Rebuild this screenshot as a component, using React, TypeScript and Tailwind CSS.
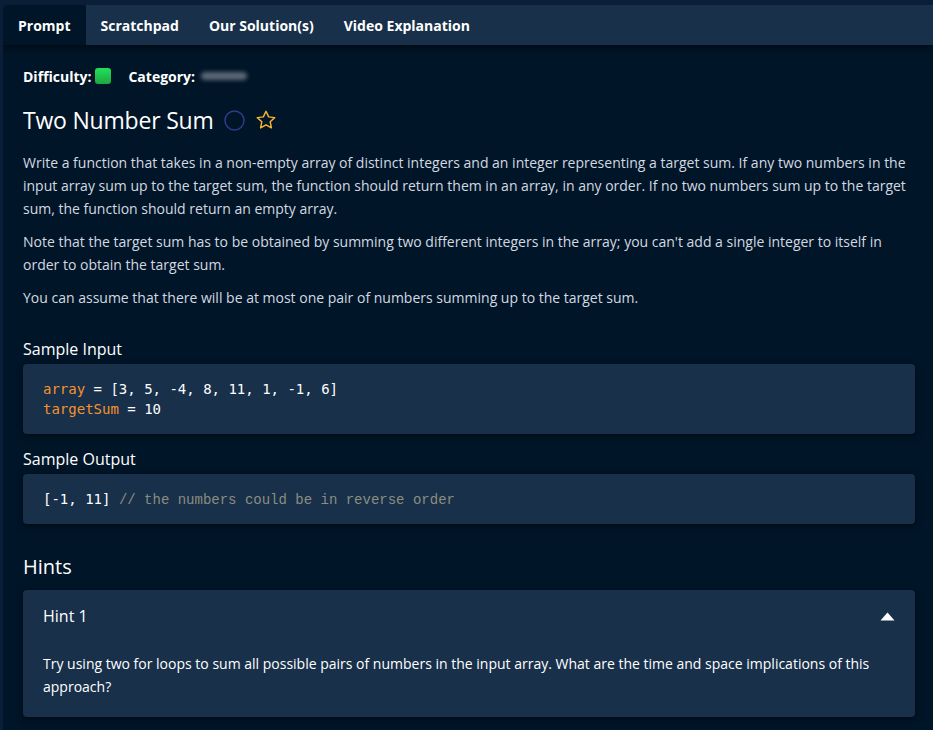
const tabs = ['Prompt', 'Scratchpad', 'Our Solution(s)', 'Video Explanation'];

const paragraphs = [
  'Write a function that takes in a non-empty array of distinct integers and an integer representing a target sum. If any two numbers in the input array sum up to the target sum, the function should return them in an array, in any order. If no two numbers sum up to the target sum, the function should return an empty array.',
  "Note that the target sum has to be obtained by summing two different integers in the array; you can't add a single integer to itself in order to obtain the target sum.",
  'You can assume that there will be at most one pair of numbers summing up to the target sum.',
];

export default function App() {
  return (
    <div
      className="w-[933px] h-[730px] overflow-hidden bg-[#0a1e38] pt-[5px] pl-[3px]"
      style={{ fontFamily: '"Open Sans", "Noto Sans", sans-serif' }}
    >
      <div className="h-full bg-[#011528] rounded-tl-[4px] overflow-hidden">
        {/* Tabs */}
        <div className="flex h-[40px] bg-[#18304a] shadow-[0_3px_6px_rgba(0,0,0,0.45)] relative z-10">
          {tabs.map((t, i) => (
            <div
              key={t}
              className={
                'flex items-center pl-[15px] pr-[15px] text-[14px] font-bold text-white ' +
                (i === 0 ? 'bg-[#011528]' : '')
              }
            >
              {t}
            </div>
          ))}
        </div>

        <div className="pl-[20px] pr-[18px] pt-[20px]">
          {/* Meta row */}
          <div className="flex items-center h-[22px] text-[14px] font-bold text-white">
            <span>Difficulty:</span>
            <span className="ml-[4px] w-[16px] h-[16px] rounded-[3px] bg-gradient-to-b from-[#1fe25a] to-[#1fa640]" />
            <span className="ml-[17px]">Category:</span>
            <span className="ml-[6px] w-[46px] h-[8px] rounded-full bg-[#5b6878] blur-[2px]" />
          </div>

          {/* Title */}
          <div className="flex items-center mt-[17px] h-[32px]">
            <h1 className="text-[23px] font-normal text-white tracking-[-0.2px]">Two Number Sum</h1>
            <svg className="ml-[10px]" width="21" height="21" viewBox="0 0 21 21">
              <circle cx="10.5" cy="10.5" r="9.5" fill="none" stroke="#2c3d8c" strokeWidth="1.5" />
            </svg>
            <svg className="ml-[10px]" width="22" height="22" viewBox="0 0 24 24">
              <path
                d="M12 2.5l2.9 6.1 6.6.8-4.9 4.6 1.3 6.6L12 17.3l-5.9 3.3 1.3-6.6-4.9-4.6 6.6-.8z"
                fill="none"
                stroke="#f2b535"
                strokeWidth="1.6"
                strokeLinejoin="round"
              />
            </svg>
          </div>

          {/* Description */}
          <div className="mt-[15px] flex flex-col gap-[10px] text-[14px] leading-[23px] text-[#d3d9e0]">
            {paragraphs.map((p) => (
              <p key={p}>{p}</p>
            ))}
          </div>

          {/* Sample input */}
          <h3 className="mt-[28px] text-[16px] font-medium text-white leading-[24px]">Sample Input</h3>
          <div
            className="mt-[3px] rounded-[4px] bg-[#18304a] shadow-[0_2px_6px_rgba(0,0,0,0.5)] px-[20px] py-[15px] text-[14px] leading-[20px] text-white"
            style={{ fontFamily: '"DejaVu Sans Mono", monospace' }}
          >
            <div>
              <span className="text-[#f5922f]">array</span> = [3, 5, -4, 8, 11, 1, -1, 6]
            </div>
            <div>
              <span className="text-[#f5922f]">targetSum</span> = 10
            </div>
          </div>

          {/* Sample output */}
          <h3 className="mt-[13px] text-[16px] font-medium text-white leading-[24px]">Sample Output</h3>
          <div
            className="mt-[3px] rounded-[4px] bg-[#18304a] shadow-[0_2px_6px_rgba(0,0,0,0.5)] px-[20px] pt-[15px] pb-[14px] text-[14px] leading-[20px] text-white"
            style={{ fontFamily: '"DejaVu Sans Mono", monospace' }}
          >
            [-1, 11]{' '}
            <span
              className="text-[14px] text-[#8a8d80]"
              style={{ fontFamily: '"Liberation Mono", monospace' }}
            >
              // the numbers could be in reverse order
            </span>
          </div>

          {/* Hints */}
          <h2 className="mt-[29px] text-[20px] font-medium text-white leading-[28px]">Hints</h2>
          <div className="mt-[9px] rounded-[4px] bg-[#18304a] shadow-[0_2px_6px_rgba(0,0,0,0.5)]">
            <div className="flex items-center justify-between h-[52px] pl-[20px] pr-[20px]">
              <span className="text-[16px] text-white">Hint 1</span>
              <svg width="15" height="9" viewBox="0 0 15 9">
                <path d="M7.5 0.5L14.5 8.5H0.5z" fill="#ffffff" />
              </svg>
            </div>
            <p className="px-[20px] pt-[10px] pb-[19px] text-[14px] leading-[23px] text-white">
              Try using two for loops to sum all possible pairs of numbers in the input array. What are the time and
              space implications of this approach?
            </p>
          </div>
        </div>
      </div>
    </div>
  );
}
